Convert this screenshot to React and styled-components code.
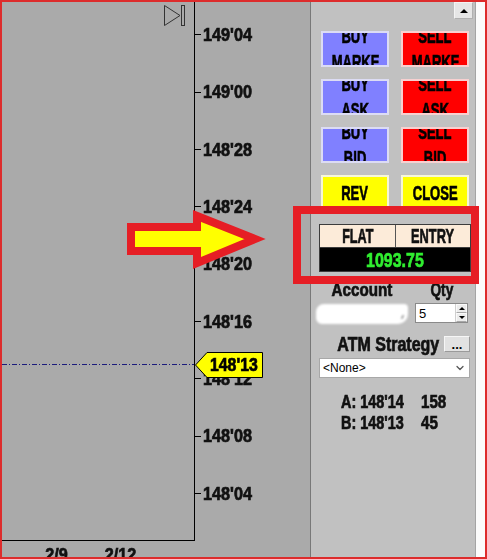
import React from 'react';
import styled, { createGlobalStyle } from 'styled-components';
import { ChevronDown } from 'lucide-react';

const BOLD = `"Liberation Sans", Arial, sans-serif`;

const Global = createGlobalStyle`
  html, body { margin: 0; padding: 0; background: #ffffff; }
  body { font-family: ${BOLD}; }
  * { box-sizing: border-box; }
`;

/* condensed heavy label text: the reference face is a tall condensed bold */
const Squeeze = styled.span`
  display: inline-block;
  white-space: nowrap;
  font-family: ${BOLD};
  font-weight: bold;
  font-size: ${(p) => p.$size || 19}px;
  -webkit-text-stroke: 0.7px currentColor;
  transform: scaleX(${(p) => p.$sx || 0.8});
  transform-origin: ${(p) => p.$o || 'center'};
`;

const Frame = styled.div`
  position: relative;
  width: 487px;
  height: 559px;
  border: 2px solid #dd2c2c;
  display: flex;
  overflow: hidden;
  background: #aaaaaa;
`;

/* ---------- chart ---------- */
const Chart = styled.div`
  width: 308px;
  flex: none;
  display: grid;
  grid-template-columns: 193px 115px;
  grid-template-rows: 539px 16px;
  background: #aaaaaa;
  color: #111;
`;

const Plot = styled.div`
  grid-column: 1;
  grid-row: 1;
  position: relative;
  border-right: 1px solid #000;
  border-bottom: 1px solid #000;
`;

const PriceAxis = styled.div`
  grid-column: 2;
  grid-row: 1 / span 2;
  display: flex;
  flex-direction: column;
  padding-top: 4.33px;
`;

const AxisRow = styled.div`
  height: 57.33px;
  flex: none;
  display: flex;
  align-items: center;
  line-height: 1;
`;

const Tick = styled.span`
  width: 6px;
  height: 1px;
  background: #000;
  flex: none;
  margin-right: 2px;
`;

const DateAxis = styled.div`
  grid-column: 1;
  grid-row: 2;
  display: flex;
  padding-left: 23px;
`;

const DateCell = styled.div`
  width: 64px;
  display: flex;
  flex-direction: column;
  align-items: center;
  line-height: 1;
`;

const DateTick = styled.span`
  width: 1px;
  height: 6px;
  background: #000;
  margin-bottom: 5px;
`;

const DashLine = styled.div`
  position: absolute;
  left: 0;
  top: 362px;
  width: 192px;
  height: 1px;
  background: repeating-linear-gradient(
    to right,
    #1c1c7c 0 5px,
    transparent 5px 7px,
    #1c1c7c 7px 8px,
    transparent 8px 10px
  );
`;

const EndIcon = styled.svg`
  position: absolute;
  left: 162px;
  top: 3px;
`;

/* ---------- panel ---------- */
const Panel = styled.div`
  width: 166px;
  flex: none;
  background: #c1c1c1;
  border-left: 1px solid #787878;
  border-right: 1px solid #a4a4a4;
  display: flex;
  flex-direction: column;
  color: #111;
`;

const Strip = styled.div`
  flex: 1;
  background: #fbfbfb;
`;

const TopBar = styled.div`
  height: 17px;
  display: flex;
  justify-content: flex-end;
  padding-right: 2px;
`;

const ScrollBtn = styled.div`
  width: 19px;
  height: 17px;
  background: #e6e6e6;
  border: 1px solid #f4f4f4;
  border-bottom-color: #b0b0b0;
  border-right-color: #b0b0b0;
  display: flex;
  align-items: center;
  justify-content: center;
  &::before {
    content: '';
    border-left: 4px solid transparent;
    border-right: 4px solid transparent;
    border-bottom: 4px solid #000;
  }
`;

const ButtonGrid = styled.div`
  margin-top: 12px;
  padding-left: 10px;
  display: grid;
  grid-template-columns: 68px 68px;
  grid-auto-rows: 36px;
  column-gap: 12px;
  row-gap: 12px;
`;

const variants = {
  buy: { bg: '#8080ff', bd: '#dcdcf4' },
  sell: { bg: '#ff0000', bd: '#f8d0d0' },
  yellow: { bg: '#ffff00', bd: '#f6f6d8' },
};

const TradeButton = styled.div`
  border: 2px solid ${(p) => variants[p.$kind].bd};
  background: ${(p) => variants[p.$kind].bg};
  overflow: hidden;
  display: flex;
  flex-direction: column;
  justify-content: center;
  align-items: center;
  line-height: 26px;
  color: #000;
`;

const PosBox = styled.div`
  margin: 13px 0 0 8px;
  width: 152px;
  border: 1px solid #3c3c3c;
`;

const PosHead = styled.div`
  display: grid;
  grid-template-columns: 75px 1fr;
  height: 23px;
  background: #fcebd9;
  border-bottom: 1px solid #3c3c3c;
`;

const PosCell = styled.div`
  display: flex;
  align-items: center;
  justify-content: center;
  line-height: 1;
  color: #111;
  & + & { border-left: 1px solid #555; }
`;

const PosValue = styled.div`
  height: 23px;
  background: #000;
  display: flex;
  align-items: center;
  justify-content: center;
  line-height: 1;
  color: #30ee30;
`;

const FieldGrid = styled.div`
  margin: 8px 0 0 5px;
  display: grid;
  grid-template-columns: 92px 53px;
  column-gap: 7px;
  row-gap: 2px;
`;

const FieldLabel = styled.div`
  text-align: center;
  line-height: 20px;
`;

const Blob = styled.div`
  position: relative;
  height: 20px;
  margin-top: 1px;
  background: #ffffff;
  border-radius: 8px 4px 10px 6px;
  filter: blur(1.2px);
`;

const BlobMark = styled.span`
  position: absolute;
  right: 5px;
  top: 11px;
  width: 1px;
  height: 4px;
  background: #555;
  transform: rotate(25deg);
`;

const QtyBox = styled.div`
  height: 20px;
  background: #fff;
  border: 1px solid #8a8a8a;
  display: flex;
  align-items: center;
  justify-content: space-between;
  font-family: 'Liberation Sans', Arial, sans-serif;
  font-size: 13px;
  color: #000;
  padding-left: 3px;
`;

const Spinner = styled.div`
  width: 12px;
  height: 18px;
  display: flex;
  flex-direction: column;
  border-left: 1px solid #d0d0d0;
`;

const SpinPart = styled.div`
  flex: 1;
  background: #ececec;
  border: 1px solid #fafafa;
  border-bottom-color: #a8a8a8;
  display: flex;
  align-items: center;
  justify-content: center;
  &::before {
    content: '';
    border-left: 3px solid transparent;
    border-right: 3px solid transparent;
    ${(p) => (p.$down ? 'border-top: 3px solid #000;' : 'border-bottom: 3px solid #000;')}
  }
`;

const AtmRow = styled.div`
  margin-top: 10px;
  height: 20px;
  display: flex;
  justify-content: flex-end;
  align-items: center;
  gap: 5px;
  padding-right: 5px;
  line-height: 20px;
`;

const DotsBtn = styled.div`
  width: 26px;
  height: 16px;
  flex: none;
  background: #e2e2e2;
  border: 1px solid #f6f6f6;
  border-right-color: #9a9a9a;
  border-bottom-color: #9a9a9a;
  display: flex;
  align-items: flex-end;
  justify-content: center;
  font-family: 'Liberation Sans', Arial, sans-serif;
  font-weight: bold;
  font-size: 13px;
  line-height: 12px;
  color: #000;
`;

const Select = styled.div`
  margin: 4px 0 0 8px;
  width: 151px;
  height: 20px;
  background: #fff;
  border: 1px solid #a8a8a8;
  display: flex;
  align-items: center;
  justify-content: space-between;
  padding: 0 3px 0 3px;
  font-family: 'Liberation Sans', Arial, sans-serif;
  font-size: 12px;
  color: #000;
`;

const Quotes = styled.div`
  margin-top: 14px;
  padding-left: 30px;
  display: grid;
  grid-template-columns: 80px auto;
  line-height: 21px;
`;

/* ---------- overlays ---------- */
const PriceTag = styled.div`
  position: absolute;
  left: 193px;
  top: 350px;
  width: 68px;
  height: 26px;
  display: flex;
  align-items: center;
  padding-left: 15px;
  line-height: 1;
  color: #000;
`;

const TagShape = styled.svg`
  position: absolute;
  left: 0;
  top: 0;
`;

const TagText = styled(Squeeze)`
  position: relative;
`;

const Arrow = styled.svg`
  position: absolute;
  left: 118px;
  top: 203px;
`;

const Highlight = styled.div`
  position: absolute;
  left: 291px;
  top: 204px;
  width: 186px;
  height: 78px;
  border: 8px solid #e61e25;
`;

const prices = ["149'04", "149'00", "148'28", "148'24", "148'20", "148'16", "148'12", "148'08", "148'04"];

const buttons = [
  { kind: 'buy', lines: ['BUY', 'MARKE'] },
  { kind: 'sell', lines: ['SELL', 'MARKE'] },
  { kind: 'buy', lines: ['BUY', 'ASK'] },
  { kind: 'sell', lines: ['SELL', 'ASK'] },
  { kind: 'buy', lines: ['BUY', 'BID'] },
  { kind: 'sell', lines: ['SELL', 'BID'] },
  { kind: 'yellow', lines: ['REV'] },
  { kind: 'yellow', lines: ['CLOSE'] },
];

export default function App() {
  return (
    <>
      <Global />
      <Frame>
        <Chart>
          <Plot>
            <EndIcon width="22" height="22" viewBox="0 0 22 22">
              <polygon points="0.5,0.5 16,10.5 0.5,20.5" fill="none" stroke="#333" strokeWidth="1" />
              <rect x="17.5" y="0.5" width="3" height="20" fill="none" stroke="#333" strokeWidth="1" />
            </EndIcon>
            <DashLine />
          </Plot>
          <PriceAxis>
            {prices.map((p) => (
              <AxisRow key={p}>
                <Tick />
                <Squeeze $size={18} $sx={0.9} $o="left">{p}</Squeeze>
              </AxisRow>
            ))}
          </PriceAxis>
          <DateAxis>
            <DateCell>
              <DateTick />
              <Squeeze $size={18} $sx={0.9}>2/9</Squeeze>
            </DateCell>
            <DateCell>
              <DateTick />
              <Squeeze $size={18} $sx={0.9}>2/12</Squeeze>
            </DateCell>
          </DateAxis>
        </Chart>

        <Panel>
          <TopBar>
            <ScrollBtn />
          </TopBar>
          <ButtonGrid>
            {buttons.map((b, i) => (
              <TradeButton key={i} $kind={b.kind}>
                {b.lines.map((l) => (
                  <Squeeze key={l} $size={21} $sx={0.62}>{l}</Squeeze>
                ))}
              </TradeButton>
            ))}
          </ButtonGrid>
          <PosBox>
            <PosHead>
              <PosCell><Squeeze $size={20} $sx={0.63}>FLAT</Squeeze></PosCell>
              <PosCell><Squeeze $size={20} $sx={0.64}>ENTRY</Squeeze></PosCell>
            </PosHead>
            <PosValue><Squeeze $size={21} $sx={0.76}>1093.75</Squeeze></PosValue>
          </PosBox>
          <FieldGrid>
            <FieldLabel><Squeeze $size={19} $sx={0.8}>Account</Squeeze></FieldLabel>
            <FieldLabel><Squeeze $size={19} $sx={0.72}>Qty</Squeeze></FieldLabel>
            <Blob>
              <BlobMark />
            </Blob>
            <QtyBox>
              5
              <Spinner>
                <SpinPart />
                <SpinPart $down />
              </Spinner>
            </QtyBox>
          </FieldGrid>
          <AtmRow>
            <Squeeze $size={19.5} $sx={0.82} $o="right">ATM Strategy</Squeeze>
            <DotsBtn>...</DotsBtn>
          </AtmRow>
          <Select>
            <span>&lt;None&gt;</span>
            <ChevronDown size={12} strokeWidth={2.5} color="#555" />
          </Select>
          <Quotes>
            <Squeeze $size={18} $sx={0.8} $o="left">A: 148'14</Squeeze>
            <Squeeze $size={18} $sx={0.84} $o="left">158</Squeeze>
            <Squeeze $size={18} $sx={0.8} $o="left">B: 148'13</Squeeze>
            <Squeeze $size={18} $sx={0.84} $o="left">45</Squeeze>
          </Quotes>
        </Panel>
        <Strip />

        <PriceTag>
          <TagShape width="68" height="26" viewBox="0 0 68 26">
            <polygon points="0.5,13 12,0.5 67.5,0.5 67.5,25.5 12,25.5" fill="#ffff00" stroke="#000" strokeWidth="1" />
          </TagShape>
          <TagText $size={18} $sx={0.88} $o="left">148'13</TagText>
        </PriceTag>

        <Arrow width="160" height="75" viewBox="120 205 160 75">
          <polygon
            points="131,227 197,227 197,216 255,239 197,263 197,251 131,251"
            fill="#ffff00"
            stroke="#e61e25"
            strokeWidth="8"
            strokeLinejoin="miter"
          />
        </Arrow>
        <Highlight />
      </Frame>
    </>
  );
}
